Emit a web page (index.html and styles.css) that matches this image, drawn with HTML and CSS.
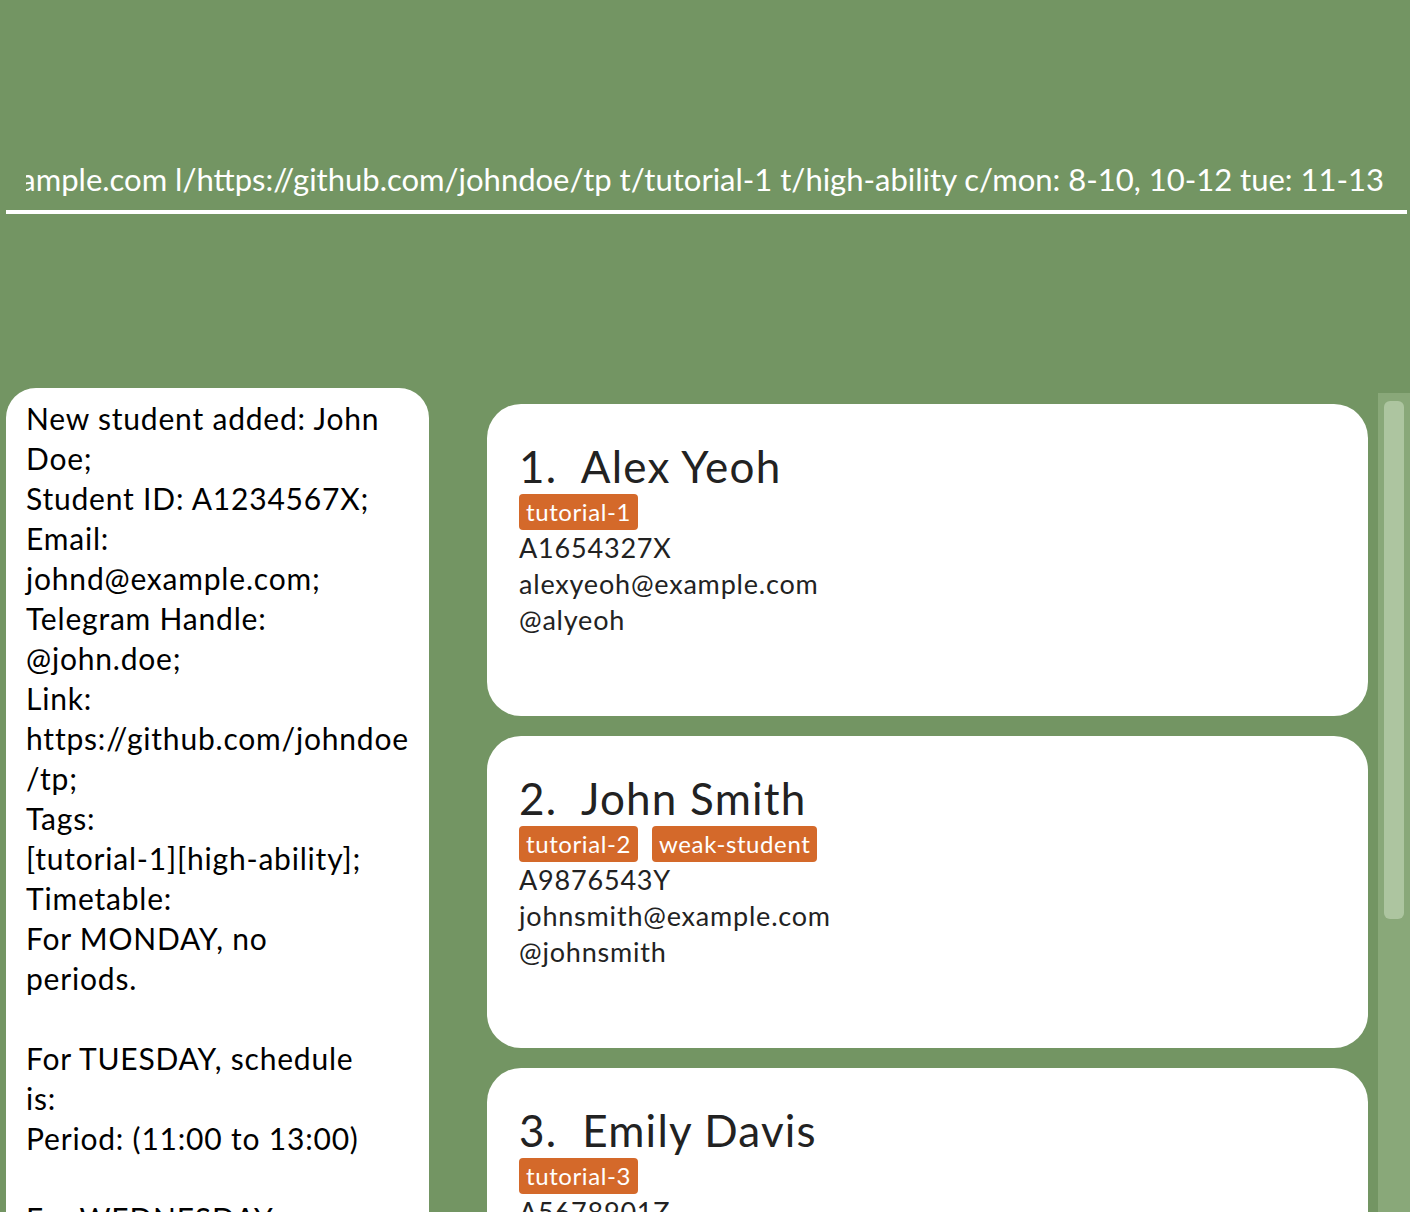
FILE: index.html
```html
<!DOCTYPE html>
<html>
<head>
<meta charset="utf-8">
<link rel="stylesheet" href="styles.css">
</head>
<body>
<div class="app">
  <div class="command">
    <div class="command-clip">
      <span class="command-text">add n/John Doe s/A1234567X h/@john.doe e/johnd@example.com l/https://github.com/johndoe/tp t/tutorial-1 t/high-ability c/mon: 8-10, 10-12 tue: 11-13</span>
    </div>
  </div>
  <div class="main">
    <div class="result">
<div class="result-text">New student added: John
Doe;
Student ID: A1234567X;
Email:
johnd@example.com;
Telegram Handle:
@john.doe;
Link:
https://github.com/johndoe
/tp;
Tags:
[tutorial-1][high-ability];
Timetable:
For MONDAY, no
periods.

For TUESDAY, schedule
is:
Period: (11:00 to 13:00)

For WEDNESDAY, no
periods.</div>
    </div>
    <div class="list-pane">
      <div class="list">
        <div class="card">
          <div class="name">1.&nbsp; Alex Yeoh</div>
          <div class="tags"><span class="tag">tutorial-1</span></div>
          <div class="line">A1654327X</div>
          <div class="line">alexyeoh@example.com</div>
          <div class="line">@alyeoh</div>
        </div>
        <div class="card">
          <div class="name">2.&nbsp; John Smith</div>
          <div class="tags"><span class="tag">tutorial-2</span><span class="tag">weak-student</span></div>
          <div class="line">A9876543Y</div>
          <div class="line">johnsmith@example.com</div>
          <div class="line">@johnsmith</div>
        </div>
        <div class="card">
          <div class="name">3.&nbsp; Emily Davis</div>
          <div class="tags"><span class="tag">tutorial-3</span></div>
          <div class="line">A5678901Z</div>
          <div class="line">emilydavis@example.com</div>
          <div class="line">@emilyd</div>
        </div>
      </div>
      <div class="scrollbar"><div class="thumb"></div></div>
    </div>
  </div>
</div>
</body>
</html>
```
FILE: styles.css
```css
html, body {
  margin: 0;
  padding: 0;
  height: 100%;
  overflow: hidden;
}
body {
  background: #739563;
  font-family: "Lato", "Open Sans", sans-serif;
}
.app {
  display: flex;
  flex-direction: column;
  height: 1212px;
}
.command {
  margin: 0 3px 0 6px;
  padding-top: 156px;
  border-bottom: 4px solid #ffffff;
  height: 54px;
}
.command-clip {
  margin-left: 20px;
  margin-right: 23px;
  overflow: hidden;
  display: flex;
  justify-content: flex-end;
  white-space: nowrap;
}
.command-text {
  color: #ffffff;
  font-size: 31px;
  line-height: 46px;
}
.main {
  display: flex;
  margin-top: 174px;
  flex: 1;
  min-height: 0;
}
.result {
  margin-left: 6px;
  width: 423px;
  background: #ffffff;
  border-radius: 30px 30px 0 0;
  padding: 10px 0 0 20px;
  box-sizing: border-box;
  overflow: hidden;
}
.result-text {
  white-space: pre;
  font-size: 30px;
  letter-spacing: 0.8px;
  line-height: 40px;
  color: #000000;
}
.list-pane {
  margin-left: 58px;
  flex: 1;
  display: flex;
  padding-top: 5px;
}
.list {
  flex: 1;
  padding-top: 11px;
  display: flex;
  flex-direction: column;
  gap: 20px;
}
.card {
  background: #ffffff;
  border-radius: 34px;
  height: 312px;
  flex: none;
  box-sizing: border-box;
  padding: 36px 32px 0 32px;
  color: #222222;
}
.name {
  font-size: 44px;
  letter-spacing: 1.2px;
  line-height: 52px;
}
.tags {
  display: flex;
  gap: 14px;
  margin-top: 2px;
}
.tag {
  background: #d4692a;
  color: #ffffff;
  font-size: 24px;
  letter-spacing: 0.6px;
  line-height: 36px;
  padding: 0 7px;
  border-radius: 4px;
}
.line {
  font-size: 27px;
  letter-spacing: 0.8px;
  line-height: 36px;
}
.scrollbar {
  margin-left: 10px;
  width: 32px;
  background: #89a879;
  padding: 8px 6px;
  box-sizing: border-box;
}
.thumb {
  height: 518px;
  background: #adc5a0;
  border-radius: 6px;
}
```
